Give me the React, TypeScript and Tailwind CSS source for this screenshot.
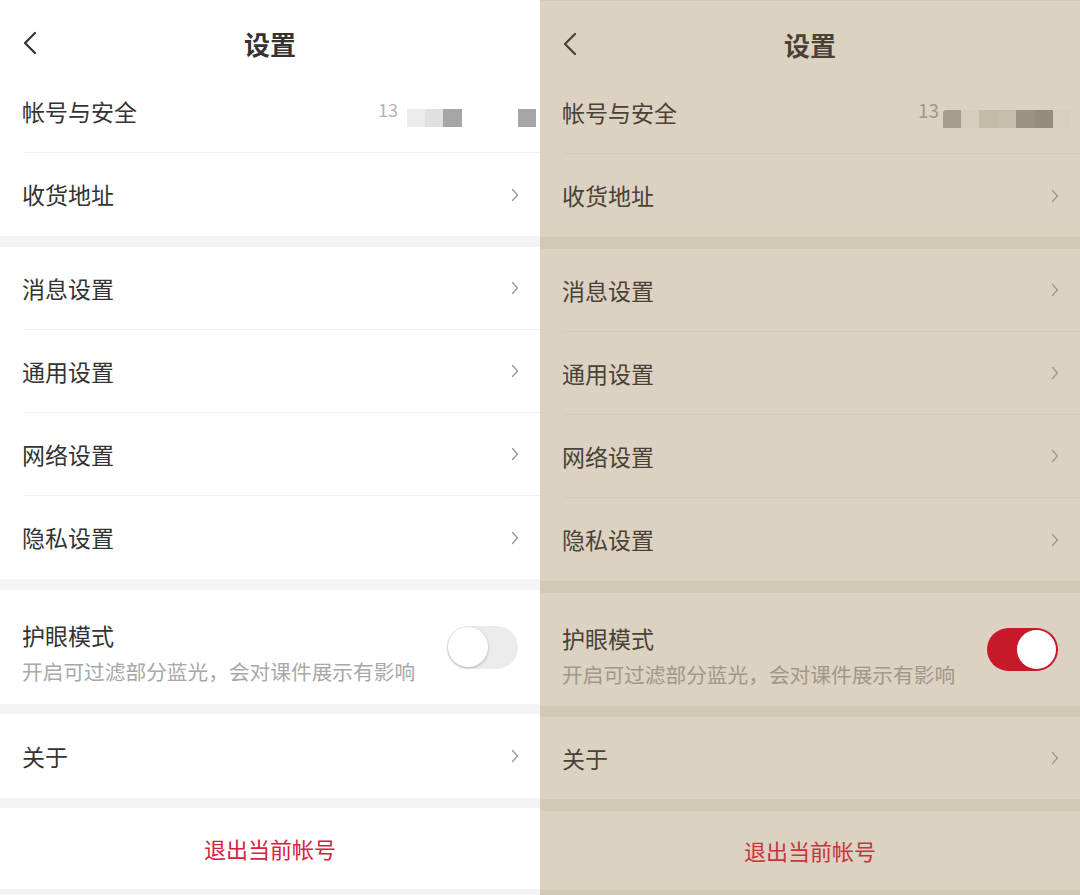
import React from 'react';

type Theme = {
  bg: string;
  gap: string;
  line: string;
  text: string;
  sub: string;
  arrow: string;
  red: string;
  dark: boolean;
};

const light: Theme = {
  bg: 'bg-white',
  gap: 'bg-[#f4f4f4]',
  line: 'bg-[#f1f1f1]',
  text: 'text-[#333333]',
  sub: 'text-[#a8a8a8]',
  arrow: 'text-[#9a9a9a]',
  red: 'text-[#d8203f]',
  dark: false,
};

const eye: Theme = {
  bg: 'bg-[#dbd2c1]',
  gap: 'bg-[#d2c8b6]',
  line: 'bg-[#d4cbba]',
  text: 'text-[#4a4137]',
  sub: 'text-[#a1978a]',
  arrow: 'text-[#a1978a]',
  red: 'text-[#c9343d]',
  dark: true,
};

const Chevron = ({ className }: { className: string }) => (
  <svg width="8" height="14" viewBox="0 0 8 14" className={className}>
    <path d="M1.5 1.5 L6.5 7 L1.5 12.5" fill="none" stroke="currentColor" strokeWidth="1.4" strokeLinecap="round" strokeLinejoin="round" />
  </svg>
);

const Row = ({ t, label, right, line }: { t: Theme; label: string; right?: React.ReactNode; line?: boolean }) => (
  <div>
    <div className={`${line ? 'h-[82px]' : 'h-[83px]'} flex items-center justify-between pl-[22px] pr-[21px]`}>
      <span className={`text-[23px] ${t.text}`}>{label}</span>
      {right ?? <Chevron className={t.arrow} />}
    </div>
    {line && <div className={`h-px ml-[23px] ${t.line}`} />}
  </div>
);

// phone number is pixelated in the screenshot
const Mosaic = ({ t }: { t: Theme }) =>
  t.dark ? (
    <div className="flex items-start gap-[4px] -mr-[12px]">
      <span className="text-[19px] leading-[18px] text-[#a1978a] mt-[4px]">13</span>
      <div className="flex h-[18px] mt-[13px]">
        <div className="w-[18px] bg-[#a59d8c] rounded-tl-[3px]" />
        <div className="w-[18px] bg-[#d6cdbd]" />
        <div className="w-[19px] bg-[#c4baa8]" />
        <div className="w-[18px] bg-[#c7bdac]" />
        <div className="w-[19px] bg-[#9b9282]" />
        <div className="w-[18px] bg-[#958c7b]" />
        <div className="w-[18px] bg-[#d8cfbe]" />
      </div>
    </div>
  ) : (
    <div className="flex items-start -mr-[17px]">
      <span className="text-[18px] leading-[18px] text-[#b4b4b4] mt-[4px] mr-[9px]">13</span>
      <div className="flex h-[18px] mt-[13px]">
        <div className="w-[18px] bg-[#ebebeb]" />
        <div className="w-[18px] bg-[#e0e0e0]" />
        <div className="w-[19px] bg-[#a6a6a6]" />
        <div className="w-[56px]" />
        <div className="w-[18px] bg-[#a6a6a6]" />
      </div>
    </div>
  );

const Toggle = ({ on }: { on: boolean }) =>
  on ? (
    <div className="w-[71px] h-[43px] rounded-full bg-[#c8192b] flex items-center justify-end pr-[2px]">
      <div className="w-[39px] h-[39px] rounded-full bg-white" />
    </div>
  ) : (
    <div className="w-[71px] h-[43px] rounded-full bg-[#ebebeb] flex items-center pl-[1px]">
      <div className="w-[40px] h-[40px] rounded-full bg-white shadow-[0_1px_3px_rgba(0,0,0,0.25)]" />
    </div>
  );

const Panel = ({ t }: { t: Theme }) => (
  <div className={`w-[540px] h-[895px] overflow-hidden flex flex-col ${t.gap} ${t.dark ? 'pt-[1px]' : ''}`}>
    <div className={t.bg}>
      <div className="h-[70px] pt-[16px] px-[22px]">
        <div className="h-[54px] relative flex items-center justify-center">
          <svg width="16" height="24" viewBox="0 0 16 24" className={`absolute left-0 ${t.text}`}>
            <path d="M13 2 L3 12 L13 22" fill="none" stroke="currentColor" strokeWidth="2.2" strokeLinecap="round" strokeLinejoin="round" />
          </svg>
          <span className={`text-[26px] font-semibold ${t.text}`}>设置</span>
        </div>
      </div>
      <Row t={t} label="帐号与安全" right={<Mosaic t={t} />} line />
      <Row t={t} label="收货地址" />
    </div>

    <div className={`${t.dark ? 'mt-[12px]' : 'mt-[11px]'} ${t.bg}`}>
      <Row t={t} label="消息设置" line />
      <Row t={t} label="通用设置" line />
      <Row t={t} label="网络设置" line />
      <Row t={t} label="隐私设置" />
    </div>

    <div
      className={`${t.dark ? 'mt-[12px] h-[113px]' : 'mt-[11px] h-[114px]'} flex items-center justify-between pl-[22px] pr-[22px] ${t.bg}`}
    >
      <div className="flex flex-col gap-[7px] self-start pt-[30px]">
        <span className={`text-[23px] leading-[30px] ${t.text}`}>护眼模式</span>
        <span className={`text-[20.7px] leading-[28px] ${t.sub}`}>开启可过滤部分蓝光，会对课件展示有影响</span>
      </div>
      <Toggle on={t.dark} />
    </div>

    <div className={`${t.dark ? 'mt-[11px]' : 'mt-[10px]'} ${t.bg}`}>
      <div className={`${t.dark ? 'h-[82px]' : 'h-[84px]'} flex items-center justify-between pl-[22px] pr-[21px]`}>
        <span className={`text-[23px] ${t.text}`}>关于</span>
        <Chevron className={t.arrow} />
      </div>
    </div>

    <div className={`${t.dark ? 'mt-[12px] h-[79px]' : 'mt-[10px] h-[81px]'} flex items-center justify-center ${t.bg}`}>
      <span className={`text-[22px] ${t.red}`}>退出当前帐号</span>
    </div>
  </div>
);

export default function App() {
  return (
    <div className="flex w-[1080px] h-[895px] font-['Noto_Sans_CJK_SC','Noto_Sans',sans-serif]">
      <Panel t={light} />
      <Panel t={eye} />
    </div>
  );
}
